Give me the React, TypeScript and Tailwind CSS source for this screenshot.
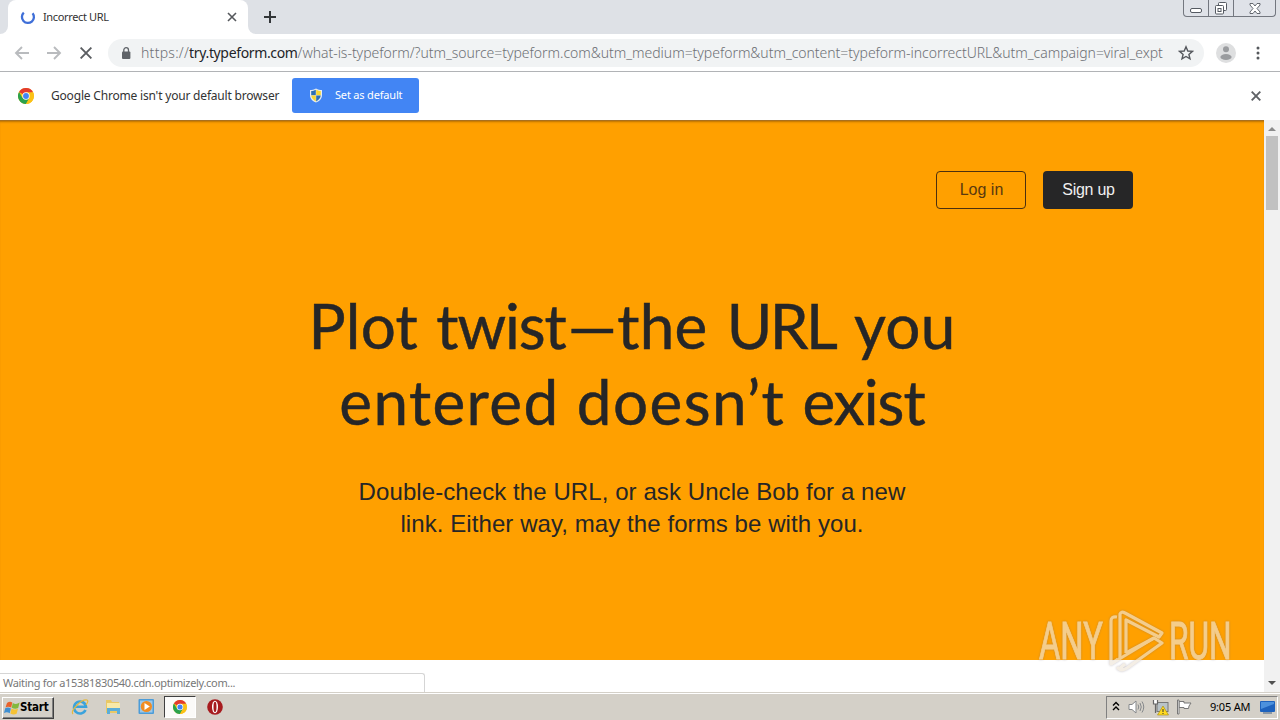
import React from "react";

const ui = "font-['Noto_Sans','Open_Sans',sans-serif]";

function ChromeLogo({ className }: { className: string }) {
  return (
    <svg viewBox="0 0 24 24" className={className}>
      <circle cx="12" cy="12" r="12" fill="#fbc116" />
      <path d="M12 12 L1.6 6 A12 12 0 0 1 22.4 6 Z" fill="#e33b2e" />
      <path d="M1.6 6 A12 12 0 0 0 12 24 L17.2 15 L12 12 L6.8 15 Z" fill="#2ba24c" />
      <path d="M12 6.5 H22.6 A12 12 0 0 1 12 24 L17 15 Z" fill="#fbc116" />
      <circle cx="12" cy="12" r="5.5" fill="#fff" />
      <circle cx="12" cy="12" r="4.4" fill="#4285f4" />
    </svg>
  );
}

function TabStrip() {
  return (
    <div className="flex h-[34px] items-stretch bg-[#dee1e6]">
      <div className="flex w-2 items-end bg-white">
        <div className="h-full w-full rounded-br-lg bg-[#dee1e6]" />
      </div>
      <div className="flex w-60 items-center rounded-t-lg bg-white pl-3">
        <svg viewBox="0 0 16 16" className="h-4 w-4" fill="none" stroke="#3f6fd8" strokeWidth="2.3">
          <path d="M3.8 3.6 A6 6 0 1 0 12.6 4.2" />
        </svg>
        <span className={`${ui} ml-[7px] w-[181px] whitespace-nowrap text-[11px] tracking-[-0.36px] text-[#333]`}>Incorrect URL</span>
        <svg viewBox="0 0 10 10" className="ml-[3px] h-[10px] w-[10px]" stroke="#55585c" strokeWidth="1.6">
          <path d="M1 1 L9 9 M9 1 L1 9" />
        </svg>
      </div>
      <div className="w-2 bg-white">
        <div className="h-full w-full rounded-bl-lg bg-[#dee1e6]" />
      </div>
      <div className="flex flex-1 items-center pl-2">
        <svg viewBox="0 0 12 12" className="h-3 w-3" stroke="#333639" strokeWidth="2">
          <path d="M6 0 V12 M0 6 H12" />
        </svg>
      </div>
      <div className="mr-1 flex h-[17px] w-[93px] rounded-b-[4px] border border-t-0 border-[#73777f] bg-[#dfe2e8]">
        <div className="flex w-[25px] items-end justify-center border-r border-[#73777f] pb-[3px]">
          <div className="h-[5px] w-3 rounded-[2px] border border-[#555a62] bg-white" />
        </div>
        <div className="flex w-[25px] items-center justify-center border-r border-[#73777f]">
          <svg viewBox="0 0 14 13" className="h-[13px] w-[14px]" fill="#fff" stroke="#555a62">
            <rect x="4.5" y="0.5" width="8" height="8" rx="1" />
            <rect x="1.5" y="3.5" width="8" height="8.5" rx="1" />
            <rect x="4" y="6.5" width="3" height="3" />
          </svg>
        </div>
        <div className="flex flex-1 items-center justify-center">
          <svg viewBox="0 0 12 11" className="h-[11px] w-3" fill="#fff" stroke="#555a62" strokeWidth="0.9">
            <path d="M1 0.5 H4 L6 3 L8 0.5 H11 V2 L8 5.5 L11 9 V10.5 H8 L6 8 L4 10.5 H1 V9 L4 5.5 L1 2 Z" />
          </svg>
        </div>
      </div>
    </div>
  );
}

function Toolbar() {
  return (
    <div className="flex h-[38px] items-center border-b border-[#b1b3b6] bg-white">
      <svg viewBox="0 0 16 14" className="ml-[14px] h-[14px] w-4" fill="none" stroke="#b9bbbe" strokeWidth="1.9">
        <path d="M15 7 H2 M8 1 L2 7 L8 13" />
      </svg>
      <svg viewBox="0 0 16 14" className="ml-4 h-[14px] w-4" fill="none" stroke="#b9bbbe" strokeWidth="1.9">
        <path d="M1 7 H14 M8 1 L14 7 L8 13" />
      </svg>
      <svg viewBox="0 0 12 12" className="ml-[18px] h-3 w-3" stroke="#5a5d61" strokeWidth="1.9">
        <path d="M0.6 0.6 L11.4 11.4 M11.4 0.6 L0.6 11.4" />
      </svg>
      <div className="ml-4 flex h-7 w-[1096px] items-center rounded-full bg-[#f1f3f4]">
        <svg viewBox="0 0 10 12" className="ml-[13px] h-3 w-[10px]">
          <rect x="1" y="4.5" width="8.4" height="7.5" rx="1" fill="#5f6368" />
          <path d="M2.8 5 V3 a2.3 2.3 0 0 1 4.7 0 V5" fill="none" stroke="#5f6368" strokeWidth="1.3" />
        </svg>
        <span className={`${ui} mb-px ml-[10px] w-[1031px] whitespace-nowrap text-[14px] font-light text-[#6d7074]`}>
          <span className="tracking-[0.27px]">https://</span>
          <span className="font-normal tracking-[-0.35px] text-[#222428]">try.typeform.com</span>
          <span className="tracking-[-0.035px]">/what-is-typeform/?utm_source=typeform.com&amp;utm_medium=typeform&amp;utm_content=typeform-incorrectURL&amp;utm_campaign=viral_expt</span>
        </span>
        <svg viewBox="0 0 16 16" className="ml-[6px] h-4 w-4" fill="none" stroke="#55585d" strokeWidth="1.4">
          <path d="M8 1.8 L9.8 6 L14.4 6.4 L10.9 9.4 L12 13.9 L8 11.5 L4 13.9 L5.1 9.4 L1.6 6.4 L6.2 6 Z" />
        </svg>
      </div>
      <svg viewBox="0 0 20 20" className="ml-3 h-5 w-5">
        <circle cx="10" cy="10" r="10" fill="#dedfe0" />
        <circle cx="10" cy="6.2" r="3" fill="#9a9c9f" />
        <ellipse cx="10" cy="14" rx="5.6" ry="3" fill="#9a9c9f" />
      </svg>
      <svg viewBox="0 0 4 14" className="ml-5 h-[14px] w-1" fill="#55585c">
        <circle cx="2" cy="2" r="1.5" />
        <circle cx="2" cy="7" r="1.5" />
        <circle cx="2" cy="12" r="1.5" />
      </svg>
    </div>
  );
}

function Shield() {
  return (
    <svg viewBox="0 0 14 15" className="h-[15px] w-[14px]">
      <path d="M7 0.5 C5 2 3 2 1 2 V7 C1 11 4 13.5 7 14.6 C10 13.5 13 11 13 7 V2 C11 2 9 2 7 0.5 Z" fill="#e6edf3" />
      <path d="M6.8 1.8 C5 2.8 4 3 2.2 3 V7.2 H6.8 Z" fill="#2d70b5" />
      <path d="M7.2 1.8 C9 2.8 10 3 11.8 3 V7.2 H7.2 Z" fill="#f7d733" />
      <path d="M6.8 7.6 H2.2 C2.6 10.5 4.5 12.3 6.8 13.4 Z" fill="#f7d733" />
      <path d="M7.2 7.6 H11.8 C11.4 10.5 9.5 12.3 7.2 13.4 Z" fill="#2d70b5" />
    </svg>
  );
}

function InfoBar() {
  return (
    <div className="flex h-12 items-center bg-white pb-px">
      <ChromeLogo className="ml-[18px] h-4 w-4" />
      <span className={`${ui} ml-[17px] w-[241px] whitespace-nowrap text-[12px] tracking-[-0.19px] text-[#333]`}>
        Google Chrome isn't your default browser
      </span>
      <div className="flex h-[35px] w-[127px] items-center rounded-[3px] bg-[#4285f4] pl-[17px]">
        <Shield />
        <span className={`${ui} ml-3 whitespace-nowrap text-[11px] tracking-[-0.18px] text-white`}>Set as default</span>
      </div>
      <svg viewBox="0 0 10 10" className="ml-auto mr-[19px] mt-px h-[10px] w-[10px]" stroke="#5f6266" strokeWidth="1.9">
        <path d="M0.7 0.7 L9.3 9.3 M9.3 0.7 L0.7 9.3" />
      </svg>
    </div>
  );
}

function Watermark() {
  return (
    <div className="absolute left-[1039px] top-[490px] flex h-[64px] w-[194px] items-center text-[#efe6d8] opacity-65 drop-shadow-[0_0_1px_rgba(110,100,120,0.6)]">
      <span className="w-[70px] origin-left scale-x-[0.64] whitespace-nowrap font-['Roboto',sans-serif] text-[51px] leading-[64px] [-webkit-text-stroke:0.9px_currentColor]">ANY</span>
      <svg viewBox="0 0 56 64" className="h-16 w-14 shrink-0" fill="none" stroke="currentColor" strokeWidth="3.2" strokeLinejoin="round">
        <path d="M8 7 Q2 6 2 11 V54 L9 49" />
        <path d="M11 48 V4 Q12 1 16 3 L53 23 L50 27 L17 10 V43" />
        <path d="M17 43 L45 28 L53 33 L18 58 Q12 62 8 57" />
        <path d="M2 54 L45 28 M10 59 L16 54" />
      </svg>
      <span className="ml-[4px] w-[62px] origin-left scale-x-[0.62] whitespace-nowrap font-['Roboto',sans-serif] text-[51px] leading-[64px] [-webkit-text-stroke:0.9px_currentColor]">RUN</span>
    </div>
  );
}

function Page() {
  return (
    <div className="relative flex h-[572px] overflow-hidden bg-white">
      <main className="flex w-[1264px] flex-col">
        <section className="flex h-[540px] flex-col items-center border-t border-[#a87020] bg-[#ffa000] text-[#262627] shadow-[inset_0_2px_2px_-1px_rgba(120,70,0,0.5)]">
          <div className="flex w-full justify-end gap-[17px] pr-[131px] pt-[50px] font-['Liberation_Sans',sans-serif] text-[16px]">
            <button className="h-[38px] w-[90px] rounded-[4px] border border-[#4c300f] pl-px text-[#5a390f]">Log in</button>
            <button className="h-[38px] w-[90px] rounded-[4px] bg-[#262627] pl-px tracking-[-0.25px] text-[#f0f0f0]">Sign up</button>
          </div>
          <h1 className="mt-[78px] whitespace-nowrap text-center font-['Lato',sans-serif] text-[62px] leading-[76px] [-webkit-text-stroke:0.5px_#262627]">
            <span className="block tracking-[0.3px]">
              Plot <span className="ml-[2px] tracking-[-1.1px]">twist</span>
              <span className="ml-[2px]">—the </span>
              <span className="ml-[3px] tracking-[-2.6px]">URL</span>
              <span className="ml-[4px]"> you</span>
            </span>
            <span className="block tracking-[1.4px]">
              entered doesn’t <span className="tracking-[-1px]">exist</span>
            </span>
          </h1>
          <p className="mt-[37px] whitespace-nowrap text-center font-['Liberation_Sans',sans-serif] text-[24px] leading-8 tracking-[0.08px]">
            Double-check the URL, or ask Uncle Bob for a new<br />link. Either way, may the forms be with you.
          </p>
        </section>
      </main>
      <div className="flex w-4 flex-col items-center bg-[#f1f1f1]">
        <svg viewBox="0 0 16 16" className="h-4 w-4 shrink-0"><path d="M4 11 L8 7 L12 11 Z" fill="#8b8b8b" /></svg>
        <div className="h-[74px] w-3 bg-[#c1c1c1]" />
        <svg viewBox="0 0 16 16" className="mt-auto h-4 w-4 shrink-0"><path d="M4 5 L8 9 L12 5 Z" fill="#505050" /></svg>
      </div>
      <Watermark />
      <div className={`${ui} absolute bottom-0 left-0 flex h-[19px] w-[425px] items-center rounded-tr-[3px] border-r border-t border-[#d5d5d5] bg-white pl-[3px] text-[11px] tracking-[-0.32px] text-[#777]`}>
        Waiting for a15381830540.cdn.optimizely.com...
      </div>
    </div>
  );
}

function Taskbar() {
  return (
    <div className="flex h-7 items-center border-t border-[#d4d0c8] bg-[#d4d0c8] shadow-[inset_0_1px_0_#fff]">
      <div className="ml-[2px] mt-[2px] flex h-[22px] w-[52px] items-center border border-b-[#404040] border-l-white border-r-[#404040] border-t-white pl-[1px] shadow-[inset_-1px_-1px_0_#808080]">
        <svg viewBox="0 0 16 16" className="h-4 w-4 shrink-0">
          <path d="M3 3 Q6 0.5 8.3 2.6 L7.2 7.6 Q4 6 1.5 7.5 Z" fill="#e8622c" />
          <path d="M8.8 3 Q12 5 15.6 2.6 L14.2 8 Q11 9.4 7.7 7.7 Z" fill="#83b83c" />
          <path d="M1.2 8.2 Q4 6.8 6.9 8.4 L5.7 13.2 Q3 11.5 0 13 Z" fill="#3f8fd2" />
          <path d="M7.5 8.5 Q10.5 10.3 14 8.8 L12.6 13.7 Q9.5 15.3 6.4 13.5 Z" fill="#f6c234" />
        </svg>
        <span className="whitespace-nowrap font-['DejaVu_Sans_Condensed','DejaVu_Sans',sans-serif] text-[11.5px] font-bold tracking-[-0.2px] text-black">Start</span>
      </div>
      <svg viewBox="0 0 18 18" className="ml-[17px] h-[18px] w-[18px]" fill="none">
        <path d="M14.5 12 A6 6 0 1 1 15 8.8 H4" stroke="#3ba3dc" strokeWidth="2.6" />
        <path d="M2 16 C-1 13 10 1 16 2 Q18 3 15 7" stroke="#e6b93d" strokeWidth="1.2" />
      </svg>
      <svg viewBox="0 0 16 16" className="ml-4 h-4 w-4">
        <path d="M1 1 H6 L7 3 H14 V14 H1 Z" fill="#e9c865" />
        <path d="M2 4 H15 V10 H2 Z" fill="#f8e9a8" />
        <path d="M2 15 V9 H15 V15 H12 V12 H5 V15 Z" fill="#5badd8" />
      </svg>
      <svg viewBox="0 0 17 17" className="ml-[17px] h-[17px] w-[17px]">
        <rect x="0.5" y="1" width="15.5" height="15" rx="1" fill="#4c9cd8" />
        <rect x="2" y="2.5" width="12.5" height="12" fill="#fff" opacity=".45" />
        <circle cx="8.4" cy="8.5" r="5.6" fill="#f18c22" />
        <path d="M6.5 5 L11.8 8.5 L6.5 12 Z" fill="#fff" />
      </svg>
      <div className="ml-[9px] mt-[1px] flex h-[22px] w-8 items-center justify-center border border-b-white border-l-[#404040] border-r-white border-t-[#404040] bg-[#fbfaf8]">
        <ChromeLogo className="h-[14px] w-[14px]" />
      </div>
      <svg viewBox="0 0 16 16" className="ml-[11px] h-4 w-4">
        <circle cx="8" cy="8" r="7.8" fill="#a71b1f" />
        <ellipse cx="8" cy="8" rx="3" ry="6.2" fill="#fff" />
        <ellipse cx="8" cy="8" rx="1.5" ry="5.2" fill="#a71b1f" />
      </svg>
      <div className="ml-auto mr-[2px] mt-[1px] flex h-[23px] w-[172px] items-center border border-b-white border-l-[#808080] border-r-white border-t-[#808080]">
        <svg viewBox="0 0 8 10" className="mb-[2px] ml-[5px] h-[10px] w-2" fill="none" stroke="#000" strokeWidth="1.4">
          <path d="M1 4.5 L4 1.5 L7 4.5 M1 9 L4 6 L7 9" />
        </svg>
        <svg viewBox="0 0 17 16" className="ml-2 h-4 w-[17px]" fill="none" stroke="#85888b">
          <path d="M1 5.5 H4 L8 2 V14 L4 10.5 H1 Z" fill="#fff" />
          <path d="M10 5.5 Q11.5 8 10 10.5 M12 4 Q14.5 8 12 12 M14 2.5 Q17.5 8 14 13.5" />
        </svg>
        <svg viewBox="0 0 17 17" className="ml-[7px] h-[17px] w-[17px]">
          <rect x="5" y="3.5" width="11" height="9" fill="#b9c3c8" stroke="#777" />
          <path d="M1.5 1 V5 H5.5 V1 M3.5 5 V14" fill="#fff" stroke="#666" strokeWidth="1.2" />
          <path d="M11 7 L16.5 16 H5.5 Z" fill="#ffda20" stroke="#a38708" strokeWidth=".6" />
          <path d="M11 10 V13 M11 14 V15" stroke="#333" />
        </svg>
        <svg viewBox="0 0 16 16" className="ml-[7px] h-4 w-4" fill="#fff" stroke="#777">
          <path d="M3 2.5 H8 V4 H15 L13 7 L12.5 9.5 H8 V8.5 H3 Z" />
          <path d="M1.5 1 V15 H3 V1 Z" />
        </svg>
        <span className={`${ui} ml-[18px] w-[43px] whitespace-nowrap text-[11px] tracking-[-0.2px] text-black`}>9:05 AM</span>
        <svg viewBox="0 0 15 14" className="ml-[7px] h-[14px] w-[15px]">
          <rect x="0" y="1" width="15" height="11" rx="1" fill="#1e62bd" />
          <path d="M1 2 H14 V4 L1 9 Z" fill="#4c91dd" />
          <path d="M3 13 H12" stroke="#8c98a5" strokeWidth="2" />
        </svg>
      </div>
    </div>
  );
}

export default function App() {
  return (
    <div className="flex h-[720px] w-[1280px] flex-col overflow-hidden">
      <TabStrip />
      <Toolbar />
      <InfoBar />
      <Page />
      <Taskbar />
    </div>
  );
}
